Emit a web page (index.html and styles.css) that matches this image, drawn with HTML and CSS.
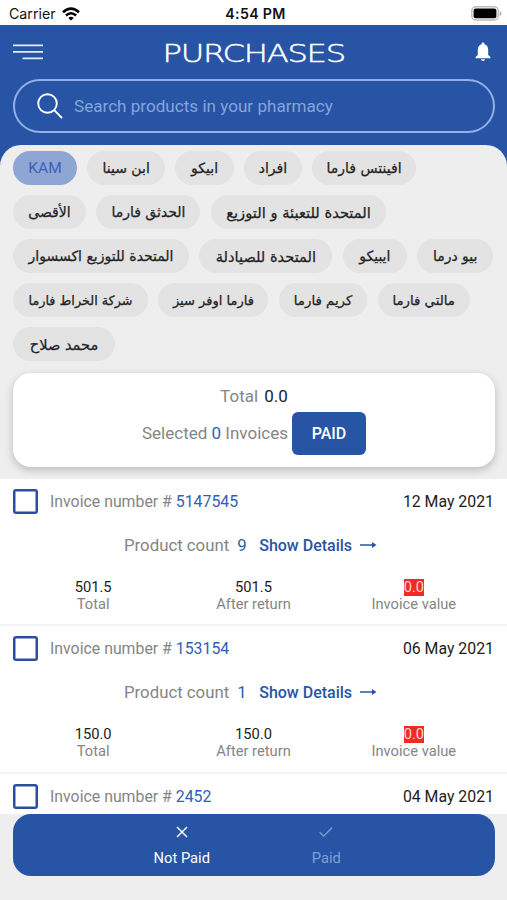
FILE: index.html
```html
<!DOCTYPE html>
<html lang="en">
<head>
<meta charset="utf-8">
<title>Purchases</title>
<link rel="stylesheet" href="styles.css">
</head>
<body>
<div class="status">
  <div class="carrier"><span>Carrier</span>
    <svg width="18" height="14" viewBox="0 0 18 14" fill="none" stroke="#000" stroke-width="2.5"><path d="M1 5.2Q9-2 17 5.2M3.9 8.5Q9 4 14.1 8.5"/><path d="M6.3 10.9Q9 8.6 11.7 10.9L9 13.6Z" fill="#000" stroke="none"/></svg>
  </div>
  <div class="time">4:54 PM</div>
  <div class="battery"><svg width="31" height="15" viewBox="0 0 31 15"><rect x=".8" y=".8" width="26.4" height="13.2" rx="4" fill="#fff" stroke="#bbb" stroke-width="1.4"/><rect x="2.6" y="2.5" width="22.8" height="9.8" rx="2" fill="#000"/><path d="M28.7 5v5q1.8-.8 1.8-2.5T28.7 5Z" fill="#aaa"/></svg></div>
</div>
<header class="header">
  <div class="bar">
    <svg class="burger" width="30" height="16" viewBox="0 0 30 16" stroke="#e3edff" stroke-width="1.9"><path d="M0 1.4H30M0 7.9H30M9.5 14.4H30"/></svg>
    <h1 class="title"><span>PURCHASES</span></h1>
    <svg class="bell" width="16" height="20" viewBox="0 0 16 20" fill="#fff"><path d="M8 0.5C7 .5 6.5 1.2 6.6 2.2C4 2.9 2.8 5 2.8 8V13L.6 15V16.2H15.4V15L13.2 13V8C13.2 5 12 2.9 9.4 2.2C9.5 1.2 9 .5 8 .5ZM5.9 17.2H10.1Q9.8 19 8 19T5.9 17.2Z"/></svg>
  </div>
  <div class="search">
    <svg width="26" height="26" viewBox="0 0 26 26" fill="none" stroke="#fff" stroke-width="1.9"><circle cx="10.5" cy="10.5" r="9.3"/><path d="M17.2 17.2L25 25"/></svg>
    <span>Search products in your pharmacy</span>
  </div>
</header>
<main class="panel">
  <div class="chips">
    <div class="row"><span class="chip active c1">KAM</span><span class="chip c2" dir="rtl">ابن سينا</span><span class="chip c3" dir="rtl">ابيكو</span><span class="chip c4" dir="rtl">افراد</span><span class="chip c5" dir="rtl">افينتس فارما</span></div>
    <div class="row"><span class="chip c6" dir="rtl">الأقصى</span><span class="chip c7" dir="rtl">الحدثق فارما</span><span class="chip c8" dir="rtl">المتحدة للتعبئة و التوزيع</span></div>
    <div class="row"><span class="chip c9" dir="rtl">المتحدة للتوزيع اكسسوار</span><span class="chip c10" dir="rtl">المتحدة للصيادلة</span><span class="chip c11" dir="rtl">ايبيكو</span><span class="chip c12" dir="rtl">بيو درما</span></div>
    <div class="row"><span class="chip c13" dir="rtl">شركة الخراط فارما</span><span class="chip c14" dir="rtl">فارما اوفر سيز</span><span class="chip c15" dir="rtl">كريم فارما</span><span class="chip c16" dir="rtl">مالتي فارما</span></div>
    <div class="row"><span class="chip c17" dir="rtl">محمد صلاح</span></div>
  </div>
  <section class="summary">
    <div class="total">Total <b>0.0</b></div>
    <div class="selected"><span>Selected <i>0</i> Invoices</span><button class="paid">PAID</button></div>
  </section>
  <section class="list">
    <article class="invoice">
      <div class="head"><span class="box"></span><span class="num">Invoice number # <i>5147545</i></span><time>12 May 2021</time></div>
      <div class="count"><span>Product count</span><i>9</i><strong>Show Details</strong><svg width="17" height="8" viewBox="0 0 17 8"><path d="M0 4H13" stroke="#2754a5" stroke-width="1.5"/><path d="M12 1L16.5 4L12 7Z" fill="#2754a5"/></svg></div>
      <div class="values"><div><b>501.5</b><span>Total</span></div><div><b>501.5</b><span>After return</span></div><div><b class="red">0.0</b><span>Invoice value</span></div></div>
    </article>
    <article class="invoice">
      <div class="head"><span class="box"></span><span class="num">Invoice number # <i>153154</i></span><time>06 May 2021</time></div>
      <div class="count"><span>Product count</span><i>1</i><strong>Show Details</strong><svg width="17" height="8" viewBox="0 0 17 8"><path d="M0 4H13" stroke="#2754a5" stroke-width="1.5"/><path d="M12 1L16.5 4L12 7Z" fill="#2754a5"/></svg></div>
      <div class="values"><div><b>150.0</b><span>Total</span></div><div><b>150.0</b><span>After return</span></div><div><b class="red">0.0</b><span>Invoice value</span></div></div>
    </article>
    <article class="invoice last">
      <div class="head"><span class="box"></span><span class="num">Invoice number # <i>2452</i></span><time>04 May 2021</time></div>
    </article>
  </section>
</main>
<nav class="tabs">
  <div class="tab"><svg width="12" height="12" viewBox="0 0 12 12" stroke="#fff" stroke-width="1.5"><path d="M1 1L11 11M11 1L1 11"/></svg><span>Not Paid</span></div>
  <div class="tab off"><svg width="14" height="12" viewBox="0 0 14 12" fill="none" stroke="#7f9fd3" stroke-width="1.3"><path d="M.7 6.2L4.7 10.2L13.2 1.5"/></svg><span>Paid</span></div>
</nav>
</body>
</html>
```
FILE: styles.css
```css
* { box-sizing: border-box; }
body { margin: 0; width: 507px; height: 900px; overflow: hidden; background: #eee; font-family: Roboto, "DejaVu Sans", sans-serif; color: #1c1c1c; }
i { font-style: normal; color: #2f5fb3; }
b { font-weight: 400; }
svg { display: block; flex: none; }

.status { height: 25px; padding: 2px 5px 0 9px; background: #fff; display: grid; grid-template-columns: 1fr auto 1fr; align-items: center; font-family: Inter, sans-serif; font-size: 14.2px; color: #111; }
.carrier { display: flex; align-items: center; gap: 6px; }
.time { font-weight: 600; font-size: 14.2px; letter-spacing: .3px; }
.battery { justify-self: end; }

.header { height: 141px; background: #2754a5; padding: 0 13px; }
.bar { height: 54px; padding-right: 3px; display: grid; grid-template-columns: 30px 1fr 16px; align-items: center; }
.title { margin: 0 0 0 -10px; padding-top: 3px; display: flex; justify-content: center; font: 200 25px/30px "DejaVu Sans", sans-serif; color: #fff; }
.title span { letter-spacing: -1px; transform: scaleX(1.29); -webkit-text-stroke: .45px #fff; }
.search { height: 54px; border: 2px solid #93b1e6; margin-right: -1px; border-radius: 27px; display: flex; align-items: center; gap: 11px; padding-left: 22px; color: #86a5dc; font-size: 17.1px; }

.panel { margin-top: -21px; height: 669px; padding-top: 6px; border-radius: 21px 21px 0 0; background: #eee; overflow: hidden; }
.chips { padding-left: 13px; display: flex; flex-direction: column; gap: 10px; }
.row { display: flex; gap: 10.4px; }
.chip { height: 34px; border-radius: 17px; background: #e3e3e3; display: flex; align-items: center; justify-content: center; white-space: nowrap; font: 14px "DejaVu Sans", sans-serif; color: #222; -webkit-text-stroke: .25px #222; }
.active { background: #8ea6d3; color: #3a62bd; font: 15.5px Roboto, sans-serif; -webkit-text-stroke: 0; }
.c1 { width: 64px; } .c2 { width: 77.5px; } .c3 { width: 58.5px; } .c4 { width: 57.5px; } .c5 { width: 104px; }
.c6 { width: 73px; } .c7 { width: 104px; } .c8 { width: 175.5px; font-size: 14.7px; }
.c9 { width: 176px; } .c10 { width: 133px; font-size: 14.6px; } .c11 { width: 64px; } .c12 { width: 76px; }
.c13 { width: 135px; font-size: 12.8px; } .c14 { width: 110px; font-size: 13px; } .c15 { width: 88.5px; font-size: 13.3px; } .c16 { width: 92px; font-size: 13.3px; }
.c17 { width: 102px; font-size: 14.6px; }

.summary { margin: 12px 12px 0 13px; height: 94px; padding-top: 10.5px; border-radius: 18px; background: #fff; box-shadow: 0 3px 8px rgba(0,0,0,.22); font-size: 17px; color: #858585; text-align: center; }
.total { height: 24px; line-height: 24px; }
.total b { color: #1c1c1c; margin-left: 2px; }
.selected { margin-top: 4px; display: flex; align-items: center; justify-content: center; gap: 4px; }
.paid { width: 74px; height: 43px; padding: 0; border: 0; border-radius: 6px; background: #2754a5; color: #fff; font: 500 16px Roboto, sans-serif; }

.list { margin-top: 12px; background: #fff; }
.invoice { height: 147.3px; border-bottom: 2px solid #f3f3f3; }
.last { border: 0; }
.head { height: 45px; padding: 0 13px; display: flex; align-items: center; font-size: 15.85px; color: #858585; }
.box { width: 25px; height: 25px; border: 2.5px solid #2c4d9e; border-radius: 3px; margin-right: 12px; box-shadow: inset 0 0 0 .5px #2c4d9e; }
.head time { margin-left: auto; color: #1c1c1c; }
.count { height: 42px; padding-left: 124px; display: flex; align-items: center; font-size: 16.8px; color: #858585; }
.count i { margin-left: 8px; width: 22px; }
.count strong { font-size: 16px; font-weight: 500; color: #2754a5; margin-right: 8px; }
.values { padding: 12.5px 13px 0; display: grid; grid-template-columns: repeat(3, 1fr); text-align: center; font-size: 14.7px; color: #858585; line-height: 17.5px; }
.values div { display: flex; flex-direction: column; align-items: center; }
.values b { color: #1c1c1c; }
.values .red { background: #f32a23; color: #ffd6d4; }

.tabs { margin: 0 12px 0 13px; height: 61.5px; border-radius: 18px; background: #2754a5; display: flex; justify-content: center; }
.tab { width: 144.5px; padding-top: 12px; display: flex; flex-direction: column; align-items: center; gap: 11px; color: #fff; font-size: 14.7px; line-height: 18px; }
.off { color: #7f9fd3; }
```
